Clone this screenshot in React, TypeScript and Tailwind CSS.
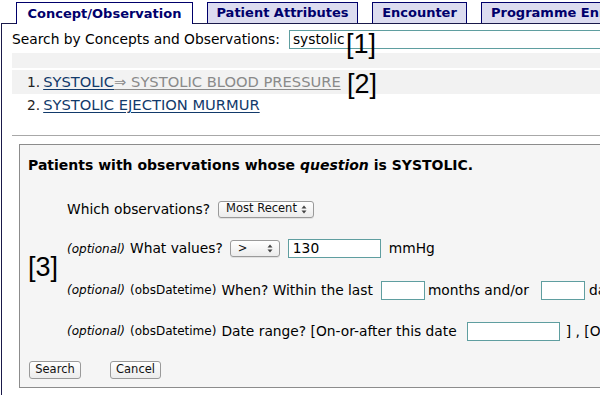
import React from 'react';

const navy = 'text-[#00006b]';

const Tab = ({ label, active, w }: { label: string; active?: boolean; w: string }) => (
  <div
    className={`${w} h-[21px] shrink-0 flex items-center justify-center border border-[#00006b] border-b-0 font-bold text-[13px] ${navy} ${
      active ? 'bg-white h-[22px] -mb-px relative z-10' : 'bg-[#dcdcf0] border-b'
    }`}
  >
    <span className="whitespace-nowrap">{label}</span>
  </div>
);

const Arrows = () => (
  <svg width="6" height="9" viewBox="0 0 6 9" className="shrink-0">
    <path d="M0.5 3.5 L3 0.5 L5.5 3.5 Z" fill="#444" />
    <path d="M0.5 5.5 L3 8.5 L5.5 5.5 Z" fill="#444" />
  </svg>
);

const MacSelect = ({ value, w }: { value: string; w: string }) => (
  <div
    className={`${w} h-[17px] shrink-0 flex items-center justify-between pl-[7px] pr-[6px] rounded-[3px] border border-[#9a9a9a] bg-gradient-to-b from-white to-[#ececec] text-[11.5px] text-[#111] shadow-[0_1px_0_rgba(0,0,0,0.08)]`}
  >
    <span className="whitespace-nowrap">{value}</span>
    <Arrows />
  </div>
);

const MacButton = ({ label, w }: { label: string; w: string }) => (
  <div
    className={`${w} h-[18px] flex items-center justify-center rounded-[3px] border border-[#9a9a9a] bg-gradient-to-b from-white to-[#ececec] text-[11.5px] text-[#111]`}
  >
    {label}
  </div>
);

const TextBox = ({ w, value }: { w: string; value?: string }) => (
  <div className={`${w} h-[19px] shrink-0 border border-[#5f9ea0] bg-white flex items-center px-[4px] text-[13.8px] text-black`}>
    {value}
  </div>
);

const Opt = () => <span className="italic text-[12px] mr-[5px]">(optional)</span>;
const ObsDt = () => <span className="text-[12px] mr-[5px]">(obsDatetime)</span>;

const markFont = { fontFamily: '"Liberation Sans", Arial, sans-serif' };

export default function App() {
  return (
    <div
      className="w-[600px] h-[395px] overflow-hidden bg-white relative text-black"
      style={{ fontFamily: '"DejaVu Sans", Verdana, sans-serif' }}
    >
      <div className="w-[900px]">
        {/* tabs */}
        <div className="flex items-end gap-[14px] pl-[16px] pt-[2px] h-[23px]">
          <Tab label="Concept/Observation" active w="w-[177px]" />
          <Tab label="Patient Attributes" w="w-[151px]" />
          <Tab label="Encounter" w="w-[95px]" />
          <Tab label="Programme Enrollment" w="w-[190px]" />
        </div>

        {/* panel */}
        <div className="ml-[1px] border border-[#1a1a4a] h-[400px] pl-[10px] pt-[6px]">
          <div className="flex items-center h-[19px] text-[13.8px]">
            <span className="whitespace-nowrap">Search by Concepts and Observations:</span>
            <div className="ml-[9px] w-[400px] h-[19px] border border-[#5f9ea0] bg-white flex items-center px-[3px]">
              systolic
            </div>
          </div>

          <div className="mt-[4px] h-[15px] bg-[#f2f2f2]" />
          <div className="mt-[2px] h-[24px] bg-[#f2f2f2] flex items-center pl-[15px] text-[14.7px] whitespace-nowrap">
            <span className="text-[#222] mr-[3px] text-[13.8px]">1.</span>
            <span className="text-[#123a6b] underline underline-offset-2">SYSTOLIC</span>
            <span className="text-[#8a8a8a] underline underline-offset-2 decoration-[#8a8a8a]">⇒ SYSTOLIC BLOOD PRESSURE</span>
          </div>
          <div className="h-[22px] flex items-center pl-[15px] text-[14.7px] whitespace-nowrap">
            <span className="text-[#222] mr-[3px] text-[13.8px]">2.</span>
            <span className="text-[#123a6b] underline underline-offset-2">SYSTOLIC EJECTION MURMUR</span>
          </div>

          <div className="mt-[19px] h-px bg-[#a8a8a8]" />

          {/* criteria box */}
          <div className="mt-[8px] ml-[7px] border border-[#8c8c8c] bg-[#f5f5f5] pl-[8px] pt-[10px] pb-[8px] text-[13.8px]">
            <div className="h-[20px] flex items-center font-bold text-[14px] whitespace-nowrap">
              Patients with observations whose&nbsp;<span className="italic">question</span>&nbsp;is SYSTOLIC.
            </div>

            <div className="ml-[39px]">
              <div className="mt-[24px] h-[20px] flex items-center whitespace-nowrap">
                <span className="mr-[8px]">Which observations?</span>
                <MacSelect value="Most Recent" w="w-[96px]" />
              </div>

              <div className="mt-[19px] h-[21px] flex items-center whitespace-nowrap">
                <Opt />
                <span className="mr-[7px]">What values?</span>
                <MacSelect value=">" w="w-[50px]" />
                <div className="ml-[8px]">
                  <TextBox w="w-[93px]" value="130" />
                </div>
                <span className="ml-[8px]">mmHg</span>
              </div>

              <div className="mt-[21px] h-[20px] flex items-center whitespace-nowrap">
                <Opt />
                <ObsDt />
                <span className="mr-[8px]">When? Within the last</span>
                <TextBox w="w-[44px]" />
                <span className="ml-[3px] mr-[12px]">months and/or</span>
                <TextBox w="w-[44px]" />
                <span className="ml-[4px]">days</span>
              </div>

              <div className="mt-[21px] h-[20px] flex items-center whitespace-nowrap">
                <Opt />
                <ObsDt />
                <span className="mr-[10px]">Date range? [On-or-after this date</span>
                <TextBox w="w-[93px]" />
                <span className="ml-[6px]">] , [On-or-before this date</span>
              </div>
            </div>

            <div className="mt-[20px] flex items-center gap-[29px] pl-[1px]">
              <MacButton label="Search" w="w-[52px]" />
              <MacButton label="Cancel" w="w-[51px]" />
            </div>
          </div>
        </div>
      </div>

      {/* annotation markers */}
      <span className="absolute left-[346px] top-[31px] text-[27px] leading-none" style={markFont}>[1]</span>
      <span className="absolute left-[347px] top-[71px] text-[27px] leading-none" style={markFont}>[2]</span>
      <span className="absolute left-[28px] top-[254px] text-[27px] leading-none" style={markFont}>[3]</span>
    </div>
  );
}
